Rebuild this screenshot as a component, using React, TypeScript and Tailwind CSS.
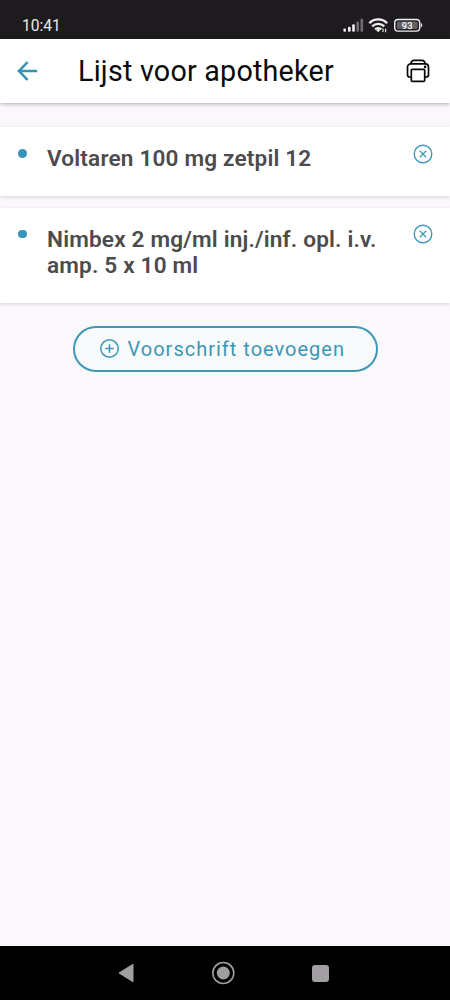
function StatusIcons() {
  return (
    <svg className="h-[20px] w-[82px]" viewBox="342 15 82 20" fill="none">
      <rect x="343.4" y="28.4" width="2.6" height="3.4" rx="1" fill="#f2f0f2" />
      <rect x="348" y="26.8" width="2.6" height="5" rx="1" fill="#f2f0f2" />
      <rect x="352.2" y="24.3" width="2.6" height="7.5" rx="1" fill="#f2f0f2" />
      <rect x="356.4" y="21.6" width="2.6" height="10.2" rx="1" fill="#6f6d70" />
      <rect x="360.5" y="18.8" width="2.6" height="13" rx="1" fill="#6f6d70" />
      <g stroke="#f2f0f2" strokeWidth="2.3">
        <path d="M369.3 23.2a12.4 12.4 0 0 1 17.8 0" />
        <path d="M372.2 26.4a8.4 8.4 0 0 1 12 0" />
        <path d="M375.1 29.4a4.4 4.4 0 0 1 6.2 0" />
      </g>
      <path d="M378.2 32.2l-2.1-2.3q2.1-1.7 4.2 0z" fill="#f2f0f2" />
      <path d="M383 32v-3.4M385.6 28.8v3.4" stroke="#f2f0f2" strokeWidth="1.1" />
      <rect x="394.7" y="19.5" width="25" height="11.6" rx="3.4" stroke="#f2f0f2" strokeWidth="1.4" />
      <rect x="396.8" y="21.5" width="20.8" height="7.6" rx="1.6" fill="#626063" />
      <path d="M421.2 23.4q1.8 1.8 0 3.8z" fill="#f2f0f2" stroke="#f2f0f2" strokeWidth=".6" />
      <text x="407.2" y="28.8" textAnchor="middle" fontSize="9.4" fontWeight="500" fill="#fff" fontFamily="Roboto, sans-serif">93</text>
    </svg>
  );
}

function PrinterIcon() {
  return (
    <svg className="h-[24px] w-[24px]" viewBox="0 0 24 24" fill="none" stroke="#080808" strokeWidth="1.7" strokeLinejoin="round">
      <path d="M5 18H3.8A2.3 2.3 0 0 1 1.5 15.7V8A3.2 3.2 0 0 1 4.7 4.8h14.6A3.2 3.2 0 0 1 22.5 8v7.7a2.3 2.3 0 0 1-2.3 2.3H19" />
      <rect x="5.3" y="10.3" width="13.4" height="12" rx="1" />
      <path d="M5 4.6A3 3 0 0 1 8 1.4h8a3 3 0 0 1 3 3.2" />
      <circle cx="19.1" cy="7.9" r="1.3" fill="#080808" stroke="none" />
    </svg>
  );
}

function CloseIcon() {
  return (
    <svg className="h-5 w-5" viewBox="0 0 20 20" fill="none" stroke="#3d98b9">
      <circle cx="10" cy="10" r="8.8" strokeWidth="1.4" />
      <path d="M6.8 6.8l6.4 6.4M13.2 6.8l-6.4 6.4" strokeWidth="1.3" />
    </svg>
  );
}

function Card({ name }: { name: string }) {
  return (
    <li className="flex bg-white pt-[16.8px] pr-[17px] pb-[23.3px] pl-[18px] shadow-[0_1px_4px_rgba(0,0,0,0.16)]">
      <span className="mt-[5.5px] h-[8.5px] w-[8.5px] shrink-0 rounded-full bg-[#3693b9]" />
      <p className="ml-[20.5px] w-[345px] pt-[2.2px] text-[22.6px] leading-[26.4px] font-semibold tracking-[0.17px] text-[#4c4b4d]">{name}</p>
      <button className="ml-auto h-5 w-5 shrink-0" aria-label="Verwijderen">
        <CloseIcon />
      </button>
    </li>
  );
}

export default function App() {
  return (
    <div className="flex h-[1000px] w-[450px] flex-col overflow-hidden bg-[#faf8fb] font-[Roboto,sans-serif]">
      <div className="flex h-[39px] shrink-0 items-start justify-between bg-[#1e1b1f] pt-[15px] pr-[26px] pl-[22px]">
        <span className="pt-px text-[15.6px] leading-[20px] font-[450] text-[#eceaec]">10:41</span>
        <StatusIcons />
      </div>
      <header className="flex h-[64px] shrink-0 items-center bg-white pr-[20px] pl-[17px] shadow-[0_1px_4px_rgba(0,0,0,0.3)]">
        <svg className="h-[20px] w-[21px]" viewBox="0 0 21 20" fill="none" stroke="#3693b1" strokeWidth="2.5">
          <path d="M20.2 10H2M10.6 1.2L1.9 10l8.7 8.8" />
        </svg>
        <h1 className="ml-[40px] text-[28.7px] leading-[34px] tracking-[0.22px] text-[#0b0b0b]">Lijst voor apotheker</h1>
        <button className="ml-auto" aria-label="Afdrukken">
          <PrinterIcon />
        </button>
      </header>
      <main className="flex flex-1 flex-col items-center pt-[24px]">
        <ul className="flex w-full flex-col gap-[12px]">
          <Card name="Voltaren 100 mg zetpil 12" />
          <Card name="Nimbex 2 mg/ml inj./inf. opl. i.v. amp. 5 x 10 ml" />
        </ul>
        <button className="mt-[23px] flex h-[46px] w-[305px] items-center rounded-full border-2 border-[#3d97b6] bg-[#f9fafb] pl-[25px] text-[#3d97b6]">
          <svg className="h-5 w-5" viewBox="0 0 20 20" fill="none" stroke="currentColor" strokeWidth="1.5">
            <circle cx="9.5" cy="9.5" r="8.7" />
            <path d="M9.5 5.3v8.4M5.3 9.5h8.4" />
          </svg>
          <span className="ml-[8px] text-[20px] leading-[24px] tracking-[1px] whitespace-nowrap">Voorschrift toevoegen</span>
        </button>
      </main>
      <nav className="flex h-[54px] shrink-0 items-center bg-black pl-[118px]">
        <svg className="h-[20px] w-[16px]" viewBox="0 0 16 20">
          <path d="M15 1.2v17.6L1 10z" fill="#a09ea0" stroke="#a09ea0" strokeLinejoin="round" />
        </svg>
        <svg className="ml-[77px] h-6 w-6" viewBox="0 0 24 24" fill="none">
          <circle cx="12.3" cy="12" r="10.5" stroke="#a09ea0" strokeWidth="1.6" />
          <circle cx="12.3" cy="12" r="6.5" fill="#a09ea0" />
        </svg>
        <span className="ml-[77px] h-[17px] w-[17px] rounded-[3px] bg-[#a09ea0]" />
      </nav>
    </div>
  );
}
